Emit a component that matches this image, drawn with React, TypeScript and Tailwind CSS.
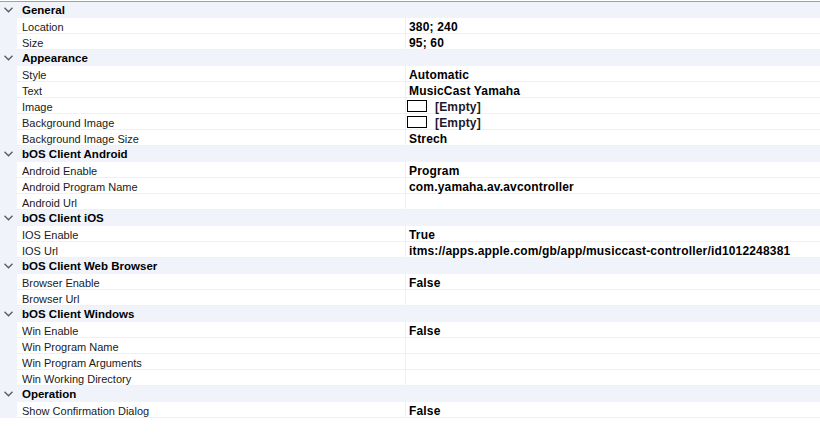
import React from "react";

type Prop = { name: string; value?: string; swatch?: boolean };
type Cat = { title: string; props: Prop[] };

const data: Cat[] = [
  { title: "General", props: [{ name: "Location", value: "380; 240" }, { name: "Size", value: "95; 60" }] },
  {
    title: "Appearance",
    props: [
      { name: "Style", value: "Automatic" },
      { name: "Text", value: "MusicCast Yamaha" },
      { name: "Image", value: "[Empty]", swatch: true },
      { name: "Background Image", value: "[Empty]", swatch: true },
      { name: "Background Image Size", value: "Strech" },
    ],
  },
  {
    title: "bOS Client Android",
    props: [
      { name: "Android Enable", value: "Program" },
      { name: "Android Program Name", value: "com.yamaha.av.avcontroller" },
      { name: "Android Url" },
    ],
  },
  {
    title: "bOS Client iOS",
    props: [
      { name: "IOS Enable", value: "True" },
      { name: "IOS Url", value: "itms://apps.apple.com/gb/app/musiccast-controller/id1012248381" },
    ],
  },
  { title: "bOS Client Web Browser", props: [{ name: "Browser Enable", value: "False" }, { name: "Browser Url" }] },
  {
    title: "bOS Client Windows",
    props: [
      { name: "Win Enable", value: "False" },
      { name: "Win Program Name" },
      { name: "Win Program Arguments" },
      { name: "Win Working Directory" },
    ],
  },
  { title: "Operation", props: [{ name: "Show Confirmation Dialog", value: "False" }] },
];

function Chevron() {
  return (
    <svg width="9" height="6" viewBox="0 0 9 6" className="ml-[4px] mr-[9px] -mt-[2px]">
      <path d="M0.5 0.8 L4.5 4.8 L8.5 0.8" fill="none" stroke="#5a5a5a" strokeWidth="1.3" />
    </svg>
  );
}

export default function App() {
  return (
    <div
      className="w-[820px] h-[434px] bg-white text-[11px] leading-none text-black overflow-hidden"
      style={{ fontFamily: '"Liberation Sans", Arial, sans-serif' }}
    >
      <div className="h-[1px]" />
      <div className="h-[1px] bg-[#a0a0a0]" />
      {data.map((c) => (
        <div key={c.title}>
          <div className="h-[16px] flex items-center pt-[2px] bg-[#f0f4fa] border-b border-[#f0f4fa]">
            <Chevron />
            <span className="font-bold text-[11.5px]">{c.title}</span>
          </div>
          {c.props.map((p) => (
            <div key={p.name} className="h-[16px] flex">
              <div className="w-[17px] bg-[#f0f4fa]" />
              <div className="w-[388px] flex items-center pt-[3px] pl-[5px] border-b border-[#f0f0f0] text-[#1a1a1a]">
                {p.name}
              </div>
              <div className="w-[1px] bg-[#f0f0f0]" />
              <div className="flex-1 flex items-center pt-[3px] border-b border-[#f0f0f0] pl-[3px] font-bold text-[12px] tracking-[0.17px]">
                {p.swatch && <div className="w-[20px] h-[12px] border border-black mr-[8px] -ml-[2px] -mt-[2px]" />}
                {p.value && <span className={p.swatch ? "text-[#1a1a2a]" : ""}>{p.value}</span>}
              </div>
            </div>
          ))}
        </div>
      ))}
    </div>
  );
}
